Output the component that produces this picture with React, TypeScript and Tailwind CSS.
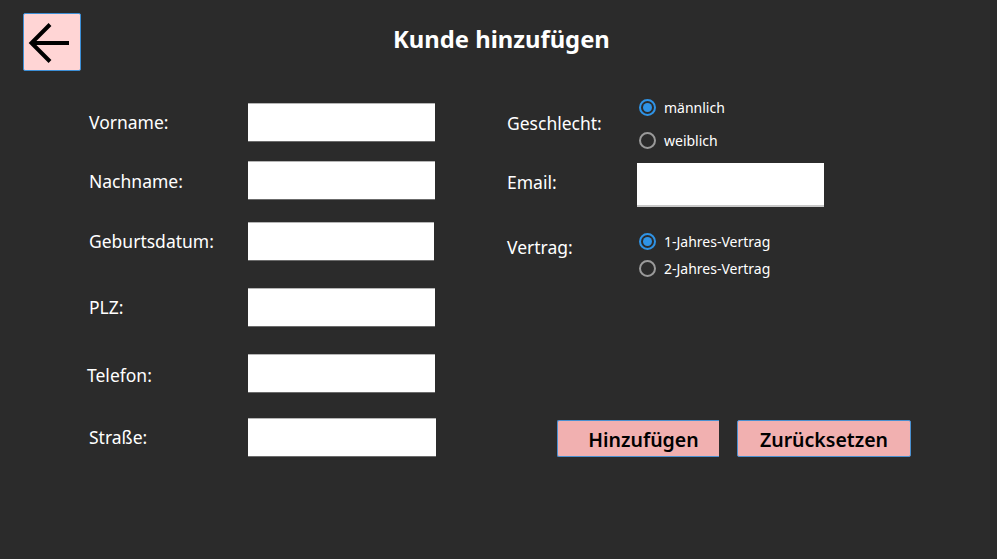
import React from "react";

const font = { fontFamily: '"Noto Sans", "Open Sans", sans-serif' };

function Field({ label, top, labelDy = 0, labelDx = 0, width = 187 }: { label: string; top: number; labelDy?: number; labelDx?: number; width?: number }) {
    return (
        <div className="flex items-center h-[39px]" style={{ marginTop: top }}>
            <span
                className="shrink-0 text-[17.5px] text-white"
                style={{ marginTop: labelDy * 2, marginLeft: labelDx, width: 159 - labelDx }}
            >
                {label}
            </span>
            <div
                className="h-[39px] shrink-0 bg-white border-t border-t-[#b5b5b5] border-b border-b-[#6b6b6b]"
                style={{ width }}
            />
        </div>
    );
}

function Radio({ label, checked }: { label: string; checked?: boolean }) {
    return (
        <div className="flex items-center h-[22px] gap-[8px]">
            {checked ? (
                <span className="w-[17px] h-[17px] rounded-full border-2 border-[#2f93e6] flex items-center justify-center">
                    <span className="w-[9px] h-[9px] rounded-full bg-[#2f93e6]" />
                </span>
            ) : (
                <span className="w-[17px] h-[17px] rounded-full border-2 border-[#9a9a9a]" />
            )}
            <span className="text-[14px] text-white">{label}</span>
        </div>
    );
}

export default function App() {
    return (
        <div className="w-[997px] h-[559px] bg-[#2b2b2b] overflow-hidden" style={font}>
            <header className="flex items-center pt-[13px] pl-[23px]">
                <button className="w-[58px] h-[58px] bg-[#ffd5d5] border border-[#3c8fd6] rounded-[2px] p-0">
                    <svg width="56" height="56" viewBox="0 0 56 56" fill="none" stroke="#000" strokeWidth="4" strokeLinecap="butt" strokeLinejoin="miter">
                        <path d="M8 29 H45" />
                        <path d="M26 10.5 L7.5 29 L26 47.5" />
                    </svg>
                </button>
                <h1 className="ml-[312px] -mt-[4px] text-[23.8px] font-bold text-white">Kunde hinzufügen</h1>
            </header>

            <main className="flex">
                <section className="w-[507px] shrink-0 pl-[89px] flex flex-col">
                    <Field label="Vorname:" top={32} />
                    <Field label="Nachname:" top={19} labelDy={1} />
                    <Field label="Geburtsdatum:" top={22} width={186} />
                    <Field label="PLZ:" top={27} />
                    <Field label="Telefon:" top={27} labelDy={2} labelDx={-2} />
                    <Field label="Straße:" top={25} width={188} />
                </section>

                <section className="flex flex-col pt-[25px]">
                    <div className="flex items-center">
                        <span className="w-[132px] text-[17.5px] text-white">Geschlecht:</span>
                        <div className="flex flex-col gap-[11px]">
                            <Radio label="männlich" checked />
                            <Radio label="weiblich" />
                        </div>
                    </div>

                    <div className="flex items-center mt-[12px] h-[44px]">
                        <span className="w-[130px] -mt-[6px] text-[17.5px] text-white">Email:</span>
                        <div className="w-[187px] h-[44px] bg-white border-b-2 border-b-[#c8c8c8]" />
                    </div>

                    <div className="flex items-start mt-[23px]">
                        <span className="w-[132px] mt-[4px] text-[17.5px] text-white">Vertrag:</span>
                        <div className="flex flex-col gap-[5px]">
                            <Radio label="1-Jahres-Vertrag" checked />
                            <Radio label="2-Jahres-Vertrag" />
                        </div>
                    </div>

                    <div className="flex gap-[18px] mt-[141px] ml-[50px]">
                        <button className="w-[162px] h-[37px] bg-[#f1b0b0] border border-r-0 border-[#4a90d0] rounded-l-[2px] text-[19.5px] font-semibold text-black pl-[10px] pt-[3px]">
                            Hinzufügen
                        </button>
                        <button className="w-[174px] h-[37px] bg-[#f1b0b0] border border-[#4a90d0] rounded-[2px] text-[19.5px] font-semibold text-black pt-[3px]">
                            Zurücksetzen
                        </button>
                    </div>
                </section>
            </main>
        </div>
    );
}
